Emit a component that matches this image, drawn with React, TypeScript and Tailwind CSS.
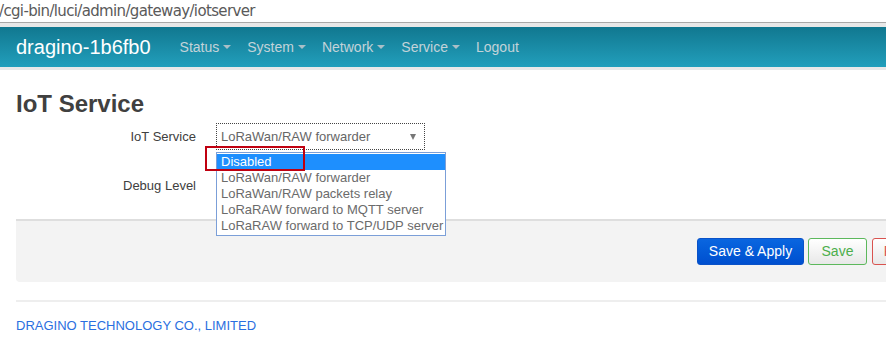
const navItems = [
  { label: 'Status', caret: true },
  { label: 'System', caret: true },
  { label: 'Network', caret: true },
  { label: 'Service', caret: true },
  { label: 'Logout', caret: false },
];

const options = [
  'Disabled',
  'LoRaWan/RAW forwarder',
  'LoRaWan/RAW packets relay',
  'LoRaRAW forward to MQTT server',
  'LoRaRAW forward to TCP/UDP server',
];

function Caret() {
  return (
    <span className="ml-[4px] inline-block w-0 h-0 border-l-[4px] border-r-[4px] border-t-[4px] border-l-transparent border-r-transparent border-t-[#aabfc7]" />
  );
}

export default function App() {
  return (
    <div className="w-[886px] h-[347px] overflow-hidden bg-white font-['Liberation_Sans',Arial,sans-serif] text-[#404040]">
      {/* 地址栏 */}
      <div className="h-[23px] border-b border-[#a8a8a8] bg-white flex items-center">
        <span className="ml-[-1px] text-[15px] leading-none text-[#5a5a5a] font-['DejaVu_Sans',sans-serif] tracking-[-0.65px]">
          /cgi-bin/luci/admin/gateway/iotserver
        </span>
      </div>
      <div className="h-[4px] bg-[#e8e8e8]" />

      {/* ナビバー */}
      <div className="h-[40px] bg-gradient-to-b from-[#117890] to-[#229fbc] flex items-center">
        <span className="ml-[16px] text-[20px] text-white leading-none">dragino-1b6fb0</span>
        <div className="ml-[21px] flex items-center">
          {navItems.map((item) => (
            <span key={item.label} className="px-[8px] text-[14px] text-[#c3d3d9] flex items-center">
              {item.label}
              {item.caret && <Caret />}
            </span>
          ))}
        </div>
      </div>
      <div className="h-[3px] bg-[#e9e9e9]" />

      <div className="pl-[16px]">
        <h2 className="mt-[22px] text-[24px] leading-[24px] font-bold text-[#404040]">IoT Service</h2>

        <div className="mt-[7px] flex flex-col gap-[22px]">
          <div className="flex items-center h-[27px]">
            <label className="w-[180px] text-right text-[13px]">IoT Service</label>
            <div className="relative ml-[20px]">
              <div className="w-[209px] h-[27px] border border-dotted border-[#444] flex items-center justify-between pl-[4px] pr-[8px]">
                <span className="text-[13px] text-[#666]">LoRaWan/RAW forwarder</span>
                <span className="w-0 h-0 border-l-[3px] border-r-[3px] border-t-[6px] border-l-transparent border-r-transparent border-t-[#777]" />
              </div>

              {/* ドロップダウン */}
              <div className="absolute left-0 top-[29px] w-[230px] bg-white border border-[#7b9fd8] py-px z-10">
                {options.map((opt, i) => (
                  <div
                    key={opt}
                    className={`h-[16px] leading-[16px] pl-[4px] text-[13px] whitespace-nowrap ${
                      i === 0 ? 'bg-[#1e8ffe] text-white' : 'text-[#6b6b6b]'
                    }`}
                  >
                    {opt}
                  </div>
                ))}
              </div>

              {/* 赤い注釈枠 */}
              <div className="absolute left-[-11px] top-[23px] w-[100px] h-[25px] border-2 border-[#c00010] z-20" />
            </div>
          </div>

          <div className="flex items-center h-[27px]">
            <label className="w-[180px] text-right text-[13px]">Debug Level</label>
            <div className="ml-[20px] w-[209px] h-[27px] border border-[#ccc]" />
          </div>
        </div>

        {/* ボタン領域 */}
        <div className="mt-[20px] w-[932px] h-[63px] bg-[#f3f3f3] border-t-2 border-[#dedede] rounded-bl-[4px] flex items-center justify-end gap-[4px] pr-[16px]">
          <button className="h-[27px] w-[107px] rounded-[3px] bg-gradient-to-b from-[#0a66e0] to-[#004fcf] border border-[#0a52c8] text-white text-[14px]">
            Save &amp; Apply
          </button>
          <button className="h-[27px] w-[59px] rounded-[3px] bg-gradient-to-b from-white to-[#e8e8e8] border border-[#5cb85c] text-[#4cae4c] text-[14px]">
            Save
          </button>
          <button className="ml-px h-[27px] w-[60px] rounded-[3px] bg-gradient-to-b from-white to-[#e8e8e8] border border-[#d9534f] text-[#d9534f] text-[14px]">
            Reset
          </button>
        </div>

        <div className="mt-[18px] border-t-2 border-[#eeeeee]" />
        <div className="mt-[17px] text-[13px] text-[#2b6fe0] leading-none">DRAGINO TECHNOLOGY CO., LIMITED</div>
      </div>
    </div>
  );
}
